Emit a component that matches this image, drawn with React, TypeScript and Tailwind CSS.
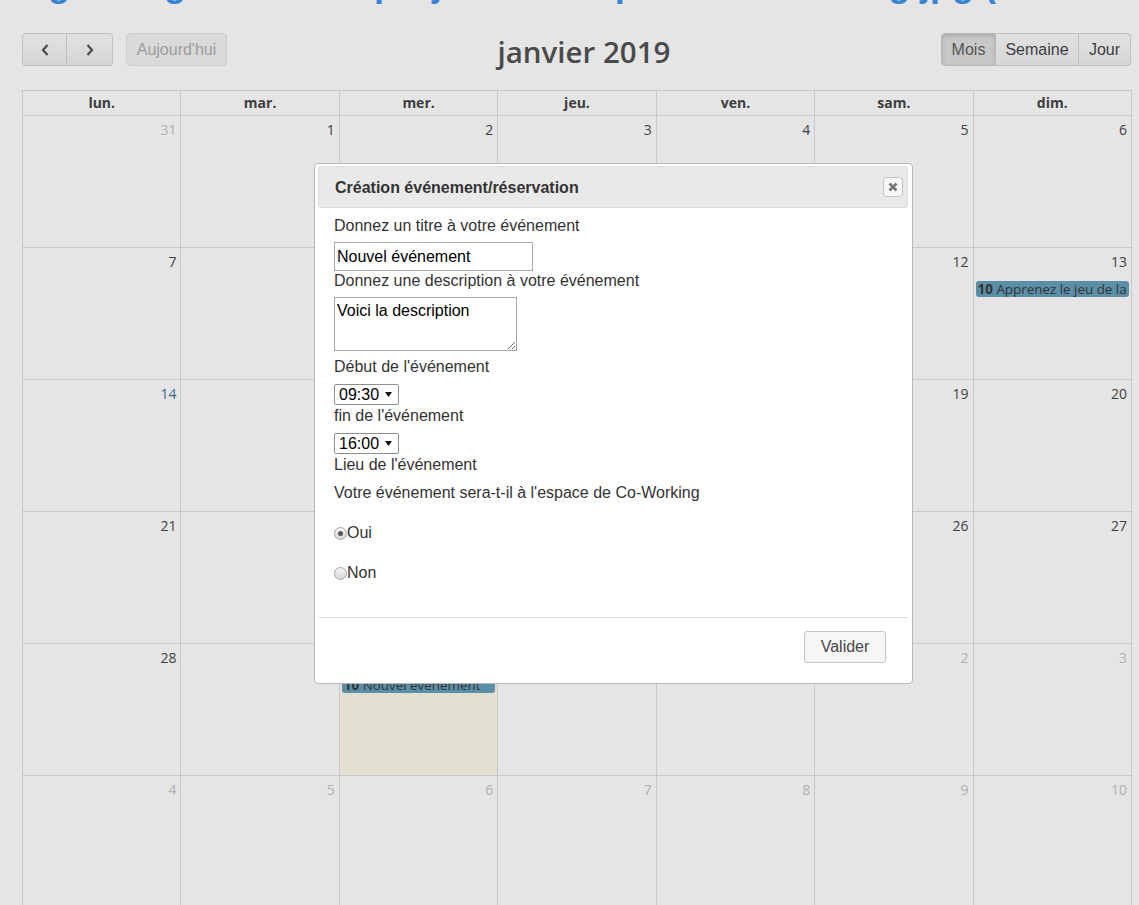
import React from 'react';

const weeks: [number, boolean][][] = [
  [[31, true], [1, false], [2, false], [3, false], [4, false], [5, false], [6, false]],
  [[7, false], [8, false], [9, false], [10, false], [11, false], [12, false], [13, false]],
  [[14, false], [15, false], [16, false], [17, false], [18, false], [19, false], [20, false]],
  [[21, false], [22, false], [23, false], [24, false], [25, false], [26, false], [27, false]],
  [[28, false], [29, false], [30, false], [31, false], [1, true], [2, true], [3, true]],
  [[4, true], [5, true], [6, true], [7, true], [8, true], [9, true], [10, true]],
];

const days = ['lun.', 'mar.', 'mer.', 'jeu.', 'ven.', 'sam.', 'dim.'];

const events: Record<string, string> = {
  '1-6': 'Apprenez le jeu de la',
  '4-2': 'Nouvel événement',
};

function Radio({ checked, label }: { checked?: boolean; label: string }) {
  return (
    <div className="flex h-[18px] items-center text-[16px] leading-[18px] text-[#333]">
      <span className="flex h-[13px] w-[13px] items-center justify-center rounded-full border border-[#a8a8a8] bg-linear-to-b from-[#f4f4f4] to-[#d8d8d8]">
        {checked && <span className="h-[5px] w-[5px] rounded-full bg-[#555]" />}
      </span>
      <span>{label}</span>
    </div>
  );
}

function TimeSelect({ value }: { value: string }) {
  return (
    <div className="flex h-[21px] w-[65px] items-center justify-between rounded-[2px] border border-[#8f8f8f] bg-white pl-[4px] pr-[6px] text-[16px] leading-[18px] text-black">
      <span>{value}</span>
      <svg width="7" height="5" viewBox="0 0 7 5">
        <path d="M0 0h7L3.5 5z" fill="#111" />
      </svg>
    </div>
  );
}

export default function App() {
  return (
    <div className="relative min-h-[905px] overflow-hidden bg-[#e5e5e5] font-['Liberation_Sans',Arial,sans-serif]">
      <div className="h-[6px] overflow-hidden">
        <h1 className="-mt-[36px] ml-[22px] whitespace-nowrap text-[36px] font-bold leading-[40px] text-[#3a85d3]">
          Agenda général des projets de l'espace Co-Working jpg (réservations)
        </h1>
      </div>

      <div className="ml-[22px] mt-[27px] flex h-[33px] w-[1109px] items-start">
        <div className="flex items-center gap-[13px]">
          <div className="flex">
            <button className="flex h-[33px] w-[45px] items-center justify-center rounded-l-[4px] border border-[#c0c0c0] bg-linear-to-b from-[#e2e2e2] to-[#d5d5d5]">
              <svg width="10" height="14" viewBox="0 0 10 14">
                <path d="M7.5 2L3 7l4.5 5" fill="none" stroke="#4a4a4a" strokeWidth="2.2" />
              </svg>
            </button>
            <button className="flex h-[33px] w-[46px] items-center justify-center rounded-r-[4px] border-y border-r border-[#c0c0c0] bg-linear-to-b from-[#e2e2e2] to-[#d5d5d5]">
              <svg width="10" height="14" viewBox="0 0 10 14">
                <path d="M2.5 2L7 7l-4.5 5" fill="none" stroke="#4a4a4a" strokeWidth="2.2" />
              </svg>
            </button>
          </div>
          <button className="h-[33px] w-[101px] rounded-[4px] border border-[#cdcdcd] bg-[#dadada] text-[16px] text-[#9c9c9c]">
            Aujourd'hui
          </button>
        </div>
        <h2 className="flex-1 pt-[2px] text-center font-['Open_Sans',sans-serif] text-[29.5px] font-semibold leading-[33px] text-[#4a4a4a]">
          janvier 2019
        </h2>
        <div className="flex text-[16px] text-[#3d3d3d]">
          <button className="h-[33px] w-[55px] rounded-l-[4px] border border-[#b8b8b8] bg-[#c8c8c8] text-[#555] shadow-[inset_0_2px_4px_rgba(0,0,0,0.15)]">
            Mois
          </button>
          <button className="h-[33px] w-[83px] border-y border-r border-[#c0c0c0] bg-linear-to-b from-[#e2e2e2] to-[#d6d6d6]">
            Semaine
          </button>
          <button className="h-[33px] w-[52px] rounded-r-[4px] border-y border-r border-[#c0c0c0] bg-linear-to-b from-[#e2e2e2] to-[#d6d6d6]">
            Jour
          </button>
        </div>
      </div>

      <div className="ml-[22px] mt-[24px] grid w-[1110px] grid-cols-7 border-l border-t border-[#c8c8c8] font-['Open_Sans',sans-serif]">
        {days.map((d) => (
          <div
            key={d}
            className="h-[25px] border-b border-r border-[#c8c8c8] text-center text-[14px] font-bold leading-[24px] text-[#3d3d3d]"
          >
            {d}
          </div>
        ))}
        {weeks.map((week, r) =>
          week.map(([n, other], c) => {
            const key = `${r}-${c}`;
            const ev = events[key];
            const today = key === '4-2';
            const color = other ? 'text-[#b0b0b0]' : key === '2-0' ? 'text-[#3b6896]' : 'text-[#404040]';
            return (
              <div
                key={key}
                className={`h-[132px] border-b border-r border-[#c8c8c8] ${today ? 'bg-[#e3e0d2]' : ''}`}
              >
                <div className={`pr-[4px] pt-[4px] text-right text-[14px] leading-[20px] ${color}`}>{n}</div>
                {ev && (
                  <div className="mx-[2px] mt-[9px] h-[16px] overflow-hidden whitespace-nowrap rounded-[3px] bg-[#5b8fa8] px-[2px] text-[13.4px] leading-[16px] text-[#333]">
                    <span className="font-bold">10</span> {ev}
                  </div>
                )}
              </div>
            );
          })
        )}
      </div>

      <div className="absolute left-[314px] top-[163px] w-[599px] rounded-[4px] border border-[#b8b8b8] bg-white pb-[20px] pl-[3px] pr-[4px] pt-[2px]">
        <div className="flex h-[42px] items-center justify-between rounded-[3px] border border-[#dddddd] bg-[#e9e9e9] pl-[16px] pr-[4px]">
          <span className="pt-[1px] text-[16px] font-bold text-[#333]">Création événement/réservation</span>
          <button className="flex h-[20px] w-[20px] items-center justify-center rounded-[3px] border border-[#c5c5c5] bg-[#f6f6f6]">
            <svg width="10" height="10" viewBox="0 0 10 10">
              <path d="M1.5 1.5l7 7M8.5 1.5l-7 7" stroke="#777" strokeWidth="2.6" />
            </svg>
          </button>
        </div>

        <div className="pl-[16px] text-[16px] leading-[18px] text-[#333]">
          <div className="mt-[8px] pt-[1px]">Donnez un titre à votre événement</div>
          <input
            defaultValue="Nouvel événement"
            className="mt-[7px] block h-[29px] w-[199px] border border-[#a9a9a9] px-[2px] text-[16px] text-black outline-none"
          />
          <div className="pt-[1px]">Donnez une description à votre événement</div>
          <textarea
            defaultValue="Voici la description"
            className="mt-[7px] block h-[54px] w-[183px] resize border border-[#a9a9a9] px-[2px] pt-[4px] text-[16px] leading-[18px] text-black outline-none"
          />
          <div className="mt-[6px] pt-[1px]">Début de l'événement</div>
          <div className="mt-[8px]">
            <TimeSelect value="09:30" />
          </div>
          <div className="mt-[1px] pt-[1px]">fin de l'événement</div>
          <div className="mt-[8px]">
            <TimeSelect value="16:00" />
          </div>
          <div className="mt-[1px] pt-[1px]">Lieu de l'événement</div>
          <div className="mt-[10px]">Votre événement sera-t-il à l'espace de Co-Working</div>
          <div className="mt-[22px]">
            <Radio checked label="Oui" />
          </div>
          <div className="mt-[22px]">
            <Radio label="Non" />
          </div>
        </div>

        <div className="mt-[35px] flex justify-end border-t border-[#dddddd] pr-[22px] pt-[13px]">
          <button className="h-[32px] w-[82px] rounded-[3px] border border-[#c5c5c5] bg-[#f6f6f6] text-[16px] text-[#454545]">
            Valider
          </button>
        </div>
      </div>
    </div>
  );
}
